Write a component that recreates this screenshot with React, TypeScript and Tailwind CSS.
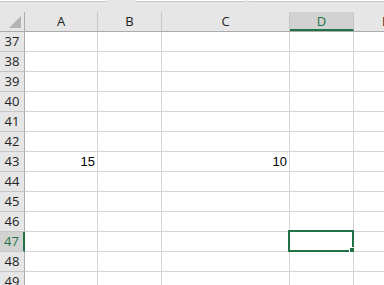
import React from "react";

// column widths include the 1px grid line on the right
const cols = [
  { key: "A", w: "w-[73px]" },
  { key: "B", w: "w-[64px]" },
  { key: "C", w: "w-[128px]" },
  { key: "D", w: "w-[64px]" },
  { key: "E", w: "w-[64px]" },
];

const values: { [row: number]: { [col: string]: string } } = {
  43: { A: "15", C: "10" },
};

const rows = [37, 38, 39, 40, 41, 42, 43, 44, 45, 46, 47, 48, 49];

export default function App() {
  const font = { fontFamily: '"Open Sans", "Liberation Sans", sans-serif' };

  return (
    <div className="w-[384px] h-[285px] overflow-hidden bg-white text-black" style={font}>
      {/* barra de fórmula (só a borda inferior aparece) */}
      <div className="h-[12px] bg-[#e6e6e6] flex items-start">
        <div className="w-[106px] h-[2px] bg-white border-b border-[#c6c6c6]" />
        <div className="w-[30px]" />
        <div className="w-[110px] h-[2px] bg-white border-b border-[#c6c6c6]" />
        <div className="w-[3px]" />
        <div className="flex-1 h-[2px] bg-white border-b border-[#c6c6c6]" />
      </div>

      {/* cabeçalho de colunas */}
      <div className="flex h-[20px] bg-[#e6e6e6] border-b border-[#ababab]">
        <div className="w-[25px] shrink-0 border-r border-[#ababab] relative">
          <svg className="absolute right-[3px] bottom-[3px]" width="12" height="12" viewBox="0 0 12 12">
            <polygon points="12,0 12,12 0,12" fill="#b4b4b4" />
          </svg>
        </div>
        {cols.map((c) => (
          <div
            key={c.key}
            className={`${c.w} shrink-0 border-r border-[#c6c6c6] flex items-center justify-center text-[13px] leading-none ${
              c.key === "D" ? "bg-[#d2d2d2] text-[#217346] border-b-2 border-b-[#217346] pt-[2px]" : "text-[#222]"
            }`}
          >
            {c.key}
          </div>
        ))}
      </div>

      {/* linhas */}
      {rows.map((r) => {
        const active = r === 47;
        return (
          <div key={r} className="flex h-[20px]">
            <div
              className={`w-[25px] shrink-0 border-b flex items-center justify-center text-[13px] leading-none ${
                active
                  ? "bg-[#d2d2d2] text-[#217346] border-r-2 border-r-[#217346] border-b-[#c6c6c6]"
                  : "bg-[#e6e6e6] text-[#222] border-r border-r-[#ababab] border-b-[#c6c6c6]"
              }`}
            >
              {r}
            </div>
            {cols.map((c) => (
              <div
                key={c.key}
                className={`${c.w} shrink-0 border-r border-b border-[#d4d4d4] relative flex items-center justify-end pr-[2px] text-[13px] leading-none`}
                style={{ fontFamily: '"Liberation Sans", sans-serif' }}
              >
                {values[r]?.[c.key]}
                {active && c.key === "D" && (
                  <div className="absolute -left-[2px] -top-[2px] w-[66px] h-[22px] border-2 border-[#217346]">
                    <div className="absolute -right-[3px] -bottom-[3px] w-[6px] h-[6px] bg-[#217346] border border-white" />
                  </div>
                )}
              </div>
            ))}
          </div>
        );
      })}
    </div>
  );
}
